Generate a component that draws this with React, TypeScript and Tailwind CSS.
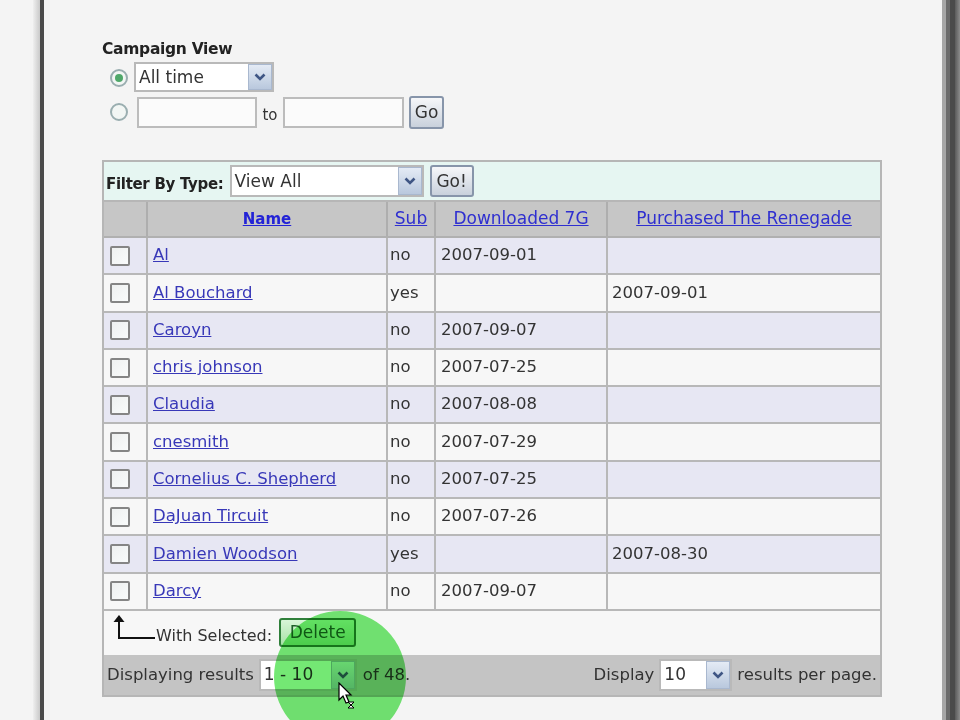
import React from "react";

const rows: { name: string; sub: string; dl: string; pr: string }[] = [
  { name: "Al", sub: "no", dl: "2007-09-01", pr: "" },
  { name: "Al Bouchard", sub: "yes", dl: "", pr: "2007-09-01" },
  { name: "Caroyn", sub: "no", dl: "2007-09-07", pr: "" },
  { name: "chris johnson", sub: "no", dl: "2007-07-25", pr: "" },
  { name: "Claudia", sub: "no", dl: "2007-08-08", pr: "" },
  { name: "cnesmith", sub: "no", dl: "2007-07-29", pr: "" },
  { name: "Cornelius C. Shepherd", sub: "no", dl: "2007-07-25", pr: "" },
  { name: "DaJuan Tircuit", sub: "no", dl: "2007-07-26", pr: "" },
  { name: "Damien Woodson", sub: "yes", dl: "", pr: "2007-08-30" },
  { name: "Darcy", sub: "no", dl: "2007-09-07", pr: "" },
];

function Chevron() {
  return (
    <svg width="12" height="8" viewBox="0 0 12 8">
      <path d="M1.5 1.5 L6 6 L10.5 1.5" fill="none" stroke="#3f5684" strokeWidth="2.6" />
    </svg>
  );
}

function Select({ text, w, h, size = "text-[17px]" }: { text: string; w: string; h: string; size?: string }) {
  return (
    <div className={`${w} ${h} flex border-2 border-[#b9b9b9] bg-white shrink-0`}>
      <div className={`flex-1 flex items-center pl-[3px] ${size} text-[#333] leading-none`}>{text}</div>
      <div className="w-[24px] flex items-center justify-center border border-[#a9b8cf] bg-gradient-to-b from-[#e4ebf5] to-[#b9c8dd]">
        <Chevron />
      </div>
    </div>
  );
}

function Button({ text, w, h }: { text: string; w: string; h: string }) {
  return (
    <div
      className={`${w} ${h} flex items-center justify-center rounded-[3px] border-2 border-[#8795aa] bg-gradient-to-b from-[#f6f7f9] to-[#c9d1dc] text-[17px] text-[#333] leading-none shrink-0`}
    >
      {text}
    </div>
  );
}

function Radio({ checked }: { checked?: boolean }) {
  return (
    <div className="w-[18px] h-[18px] rounded-full border-2 border-[#9aaeb0] bg-[#f2f6f4] flex items-center justify-center shrink-0">
      {checked && <div className="w-[8px] h-[8px] rounded-full bg-[#4fa86a]" />}
    </div>
  );
}

function Checkbox() {
  return <div className="w-[20px] h-[20px] border-2 border-[#858585] rounded-[2px] bg-gradient-to-br from-[#eef0f0] to-[#f9fbfb]" />;
}

export default function App() {
  return (
    <div
      className="w-[960px] h-[720px] flex bg-[#f4f4f4] overflow-hidden relative text-[#333]"
      style={{ fontFamily: '"DejaVu Sans", Verdana, sans-serif' }}
    >
      <div className="w-[33px] shrink-0" />
      <div className="w-[7px] shrink-0 bg-gradient-to-r from-[#efefef] to-[#c9c9c9]" />
      <div className="w-[4px] shrink-0 bg-[#4a4a4a]" />

      <div className="flex-1 pl-[58px] pt-[40px]">
        <div className="h-[18px] text-[15.5px] font-bold leading-[18px] text-[#222] tracking-[-0.3px]">Campaign View</div>

        <div className="mt-[4px] h-[30px] flex items-center">
          <div className="ml-[8px] mr-[6px] mt-[2px]">
            <Radio checked />
          </div>
          <Select text="All time" w="w-[140px]" h="h-[30px]" />
        </div>

        <div className="mt-[3px] h-[34px] flex items-center">
          <div className="ml-[8px] mr-[9px]">
            <Radio />
          </div>
          <div className="w-[120px] h-[31px] border-2 border-[#bcbcbc] bg-[#fbfbfb]" />
          <div className="w-[26px] text-center text-[15px] pt-[6px]">to</div>
          <div className="w-[121px] h-[31px] border-2 border-[#bcbcbc] bg-[#fbfbfb]" />
          <div className="ml-[5px]">
            <Button text="Go" w="w-[35px]" h="h-[33px]" />
          </div>
        </div>

        <div className="mt-[31px] w-[780px] border-2 border-[#b6b6b6]">
          <div className="h-[40px] flex items-center bg-[#e6f6f2] border-b-2 border-[#b6b6b6] pl-[2px]">
            <div className="text-[15px] font-bold text-[#222] tracking-[-0.3px] pt-[6px]">Filter By Type:</div>
            <div className="ml-[6px]">
              <Select text="View All" w="w-[194px]" h="h-[32px]" />
            </div>
            <div className="ml-[6px]">
              <Button text="Go!" w="w-[44px]" h="h-[32px]" />
            </div>
          </div>

          <div className="h-[36px] grid grid-cols-[44px_240px_48px_172px_272px] bg-[#c6c6c6] border-b-2 border-[#b0b0b0]">
            <div className="border-r-2 border-[#aeaeae]" />
            <div className="border-r-2 border-[#aeaeae] flex items-center justify-center">
              <span className="text-[15px] font-bold text-[#2323d6] underline">Name</span>
            </div>
            <div className="border-r-2 border-[#aeaeae] flex items-center justify-center">
              <span className="text-[17px] text-[#2f2fd0] underline">Sub</span>
            </div>
            <div className="border-r-2 border-[#aeaeae] flex items-center justify-center">
              <span className="text-[17px] text-[#2f2fd0] underline">Downloaded 7G</span>
            </div>
            <div className="flex items-center justify-center">
              <span className="text-[17px] text-[#2f2fd0] underline">Purchased The Renegade</span>
            </div>
          </div>

          {rows.map((r, i) => (
            <div
              key={r.name}
              className={`h-[37.3px] grid grid-cols-[44px_240px_48px_172px_272px] border-b-2 border-[#b8b8b8] text-[16.5px] ${
                i % 2 === 0 ? "bg-[#e7e7f3]" : "bg-[#f7f7f7]"
              }`}
            >
              <div className="border-r-2 border-[#b8b8b8] flex items-center pl-[6px]">
                <Checkbox />
              </div>
              <div className="border-r-2 border-[#b8b8b8] flex items-center pl-[5px]">
                <span className="text-[#3838b8] underline">{r.name}</span>
              </div>
              <div className="border-r-2 border-[#b8b8b8] flex items-center pl-[2px]">{r.sub}</div>
              <div className="border-r-2 border-[#b8b8b8] flex items-center pl-[5px]">{r.dl}</div>
              <div className="flex items-center pl-[4px]">{r.pr}</div>
            </div>
          ))}

          <div className="h-[44px] flex items-center bg-[#f7f7f7]">
            <svg width="50" height="30" viewBox="0 0 50 30" className="ml-[4px] -mt-[10px]">
              <path d="M11 9 L11 25 L47 25" fill="none" stroke="#111" strokeWidth="2" />
              <path d="M5.5 9 L16.5 9 L11 2 Z" fill="#111" />
            </svg>
            <span className="text-[16px] -ml-[2px] pt-[6px]">With Selected:</span>
            <div className="ml-[7px] w-[77px] h-[29px] flex items-center justify-center rounded-[3px] border-2 border-[#2f7f3a] bg-gradient-to-b from-[#d8f6d8] to-[#a6e2a6] text-[17px] text-[#1f5f2a] leading-none">
              Delete
            </div>
          </div>

          <div className="h-[40px] flex items-center bg-[#c4c4c4] text-[16.5px] pl-[3px] pr-[3px]">
            <span>Displaying results</span>
            <div className="ml-[5px]">
              <Select text="1 - 10" w="w-[98px]" h="h-[32px]" />
            </div>
            <span className="ml-[6px]">of 48.</span>
            <div className="flex-1" />
            <span>Display</span>
            <div className="ml-[5px]">
              <Select text="10" w="w-[73px]" h="h-[32px]" />
            </div>
            <span className="ml-[5px]">results per page.</span>
          </div>
        </div>
      </div>

      <div className="w-[4px] shrink-0 bg-[#a6a6a6]" />
      <div className="w-[4px] shrink-0 bg-[#6b6b6b]" />
      <div className="w-[5px] shrink-0 bg-[#4a4a4a]" />
      <div className="w-[5px] shrink-0 bg-gradient-to-r from-[#5a5a5a] to-[#8c8c8c]" />

      <div className="absolute left-[274px] top-[611px] w-[132px] h-[132px] rounded-full bg-[#74e874] mix-blend-multiply pointer-events-none" />
      <svg className="absolute left-[338px] top-[682px]" width="20" height="28" viewBox="0 0 20 28">
        <path d="M1 1 L1 18 L5 14 L8 21 L11 20 L8 13 L13 13 Z" fill="#fff" stroke="#000" strokeWidth="1.2" />
        <path d="M10 20 L16 20 L13 23 L16 26 L10 26 L13 23 Z" fill="#fff" stroke="#000" strokeWidth="1" />
      </svg>
    </div>
  );
}
